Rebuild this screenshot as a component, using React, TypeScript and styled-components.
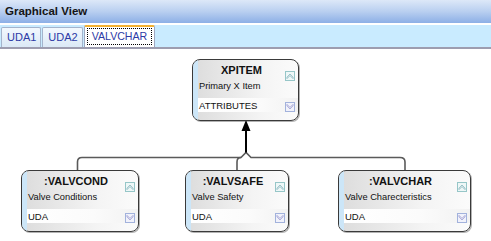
import React from "react";
import styled, { createGlobalStyle } from "styled-components";

const Global = createGlobalStyle`
  html, body { margin: 0; padding: 0; background: #fff; overflow: hidden; }
  body { font-family: "Liberation Sans", Arial, sans-serif; }
`;

const Window = styled.div`
  width: 491px;
  height: 241px;
  display: flex;
  flex-direction: column;
  background: #fff;
`;

const Header = styled.div`
  height: 23px;
  line-height: 23px;
  padding-left: 5px;
  font-size: 11.5px;
  font-weight: bold;
  color: #151515;
  background: linear-gradient(to bottom, #dde8f8 0%, #b9cff0 50%, #8cafe6 100%);
  margin-bottom: 2px;
`;

const TabStrip = styled.div`
  height: 22px;
  display: flex;
  align-items: flex-end;
  gap: 1px;
  padding-left: 1px;
  background: #c9ebff;
  border-bottom: 2px solid #9d9db0;
`;

const Tab = styled.div`
  box-sizing: border-box;
  height: 20px;
  padding: 0 4px 0 5px;
  border: 1px solid #a4b4cc;
  border-bottom: none;
  border-radius: 2px 2px 0 0;
  background: linear-gradient(to bottom, #f2f8fe, #dbe9f6);
  font-size: 11px;
  line-height: 19px;
  color: #2c3aa6;
`;

const ActiveTab = styled.div`
  box-sizing: border-box;
  height: 22px;
  padding: 0 2px;
  border: 1px solid #a0a8c0;
  border-top: 2px solid #f4b232;
  border-bottom: none;
  border-radius: 2px 2px 0 0;
  background: #fff;
  font-size: 10.6px;
  color: #2c3aa6;
`;

const Focus = styled.div`
  margin-top: 1px;
  padding: 0 4px;
  border: 1px dotted #000;
  line-height: 15px;
`;

const Canvas = styled.div`
  position: relative;
  flex: 1;
  background: #fff;
`;

const Edges = styled.svg`
  position: absolute;
  left: 0;
  top: 0;
`;

const NodeBox = styled.div<{ $x: number; $y: number; $w: number }>`
  position: absolute;
  left: ${(p) => p.$x}px;
  top: ${(p) => p.$y}px;
  width: ${(p) => p.$w}px;
  height: 62px;
  box-sizing: border-box;
  border: 1px solid #3a3a3a;
  border-radius: 8px;
  overflow: hidden;
  display: flex;
  background: linear-gradient(to right, #dcdcdc 0%, #e9e9e9 35%, #f4f4f4 65%, #fbfbfb 100%);
  box-shadow: 1px 1px 0 rgba(0, 0, 0, 0.3);
`;

const Strip = styled.div`
  width: 5px;
  flex-shrink: 0;
  background: #cce6f8;
`;

const Body = styled.div`
  flex: 1;
  display: flex;
  flex-direction: column;
  padding-top: 4px;
  min-width: 0;
`;

const TitleRow = styled.div`
  display: flex;
  height: 13px;
`;

const Title = styled.div`
  flex: 1;
  text-align: center;
  font-size: 11px;
  font-weight: bold;
  line-height: 13px;
  color: #111;
`;

const Desc = styled.div`
  margin-top: 4px;
  padding-left: 1px;
  font-size: 9.3px;
  line-height: 11px;
  color: #111;
  white-space: nowrap;
`;

const Row = styled.div`
  margin-top: 6px;
  height: 14px;
  display: flex;
  align-items: center;
  padding-left: 1px;
  background: linear-gradient(to right, #ffffff 0%, #fbfbfb 60%, #f2f2f2 100%);
  font-size: 9.5px;
  color: #111;
`;

const RowLabel = styled.span`
  flex: 1;
`;

const IconWrap = styled.span<{ $down?: boolean }>`
  width: 10px;
  height: 10px;
  margin-right: 3px;
  align-self: ${(p) => (p.$down ? "flex-end" : "flex-start")};
  margin-top: ${(p) => (p.$down ? "0" : "3px")};
  display: block;
`;

const UpIcon = () => (
  <IconWrap>
    <svg width="10" height="10" viewBox="0 0 10 10">
      <rect x="0.5" y="0.5" width="9" height="9" fill="#eef7f7" stroke="#96c6c8" />
      <polygon points="2,6.2 5,3 8,6.2 8,7.6 5,4.6 2,7.6" fill="none" stroke="#86b4bc" strokeWidth="0.8" />
    </svg>
  </IconWrap>
);

const DownIcon = () => (
  <IconWrap $down>
    <svg width="10" height="10" viewBox="0 0 10 10">
      <rect x="0.5" y="0.5" width="9" height="9" fill="#f1f2fb" stroke="#a2b2dc" />
      <polygon points="2,3.8 5,7 8,3.8 8,2.4 5,5.4 2,2.4" fill="none" stroke="#9c9ccf" strokeWidth="0.8" />
    </svg>
  </IconWrap>
);

type NodeProps = { x: number; y: number; w: number; title: string; desc: string; row: string };

const Node = ({ x, y, w, title, desc, row }: NodeProps) => (
  <NodeBox $x={x} $y={y} $w={w}>
    <Strip />
    <Body>
      <TitleRow>
        <Title>{title}</Title>
        <UpIcon />
      </TitleRow>
      <Desc>{desc}</Desc>
      <Row>
        <RowLabel>{row}</RowLabel>
        <DownIcon />
      </Row>
    </Body>
  </NodeBox>
);

const TOP = 49;

export default function App() {
  return (
    <>
      <Global />
      <Window>
        <Header>Graphical View</Header>
        <TabStrip>
          <Tab>UDA1</Tab>
          <Tab>UDA2</Tab>
          <ActiveTab>
            <Focus>VALVCHAR</Focus>
          </ActiveTab>
        </TabStrip>
        <Canvas>
          <Edges width="491" height="192" viewBox={`0 ${TOP} 491 192`}>
            <path
              d="M77.5 171 V162 Q77.5 157.5 82 157.5 H241 L246 152.5 L251 157.5 H400 Q405 157.5 405 162 V171"
              fill="none"
              stroke="#5a5a5a"
              strokeWidth="1.6"
            />
            <path d="M237 171 V162 Q237 157.5 241 157.5" fill="none" stroke="#5a5a5a" strokeWidth="1.6" />
            <line x1="246" y1="152.5" x2="246" y2="129" stroke="#000" strokeWidth="2" />
            <polygon points="246,120 241.5,131 250.5,131" fill="#000" />
          </Edges>
          <Node x={192} y={59 - TOP} w={107} title="XPITEM" desc="Primary X Item" row="ATTRIBUTES" />
          <Node x={21} y={170 - TOP} w={118} title=":VALVCOND" desc="Valve Conditions" row="UDA" />
          <Node x={185} y={170 - TOP} w={104} title=":VALVSAFE" desc="Valve Safety" row="UDA" />
          <Node x={338} y={170 - TOP} w={133} title=":VALVCHAR" desc="Valve Charecteristics" row="UDA" />
        </Canvas>
      </Window>
    </>
  );
}
